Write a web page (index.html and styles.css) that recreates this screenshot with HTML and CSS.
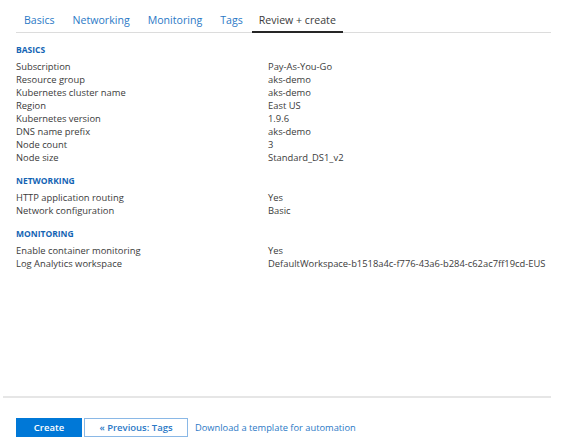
FILE: index.html
```html
<!DOCTYPE html>
<html>
<head>
<meta charset="utf-8">
<link rel="stylesheet" href="styles.css">
</head>
<body>
<div class="page">
  <nav class="tabs">
    <span class="tab">Basics</span>
    <span class="tab">Networking</span>
    <span class="tab">Monitoring</span>
    <span class="tab">Tags</span>
    <span class="tab active">Review + create</span>
  </nav>
  <main class="content">
    <section class="group">
      <h3 class="heading">BASICS</h3>
      <div class="row"><span class="label">Subscription</span><span class="value">Pay-As-You-Go</span></div>
      <div class="row"><span class="label">Resource group</span><span class="value">aks-demo</span></div>
      <div class="row"><span class="label">Kubernetes cluster name</span><span class="value">aks-demo</span></div>
      <div class="row"><span class="label">Region</span><span class="value">East US</span></div>
      <div class="row"><span class="label">Kubernetes version</span><span class="value">1.9.6</span></div>
      <div class="row"><span class="label">DNS name prefix</span><span class="value">aks-demo</span></div>
      <div class="row"><span class="label">Node count</span><span class="value">3</span></div>
      <div class="row"><span class="label">Node size</span><span class="value">Standard_DS1_v2</span></div>
    </section>
    <section class="group">
      <h3 class="heading">NETWORKING</h3>
      <div class="row"><span class="label">HTTP application routing</span><span class="value">Yes</span></div>
      <div class="row"><span class="label">Network configuration</span><span class="value">Basic</span></div>
    </section>
    <section class="group">
      <h3 class="heading">MONITORING</h3>
      <div class="row"><span class="label">Enable container monitoring</span><span class="value">Yes</span></div>
      <div class="row"><span class="label">Log Analytics workspace</span><span class="value">DefaultWorkspace-b1518a4c-f776-43a6-b284-c62ac7ff19cd-EUS</span></div>
    </section>
  </main>
  <footer class="footer">
    <button class="btn primary">Create</button>
    <button class="btn secondary">« Previous: Tags</button>
    <a class="link">Download a template for automation</a>
  </footer>
</div>
</body>
</html>
```
FILE: styles.css
```css
html, body {
  margin: 0;
  padding: 0;
  background: #fff;
}
body {
  font-family: "Open Sans", "Noto Sans", sans-serif;
  color: #3b3b3b;
  width: 573px;
  height: 448px;
  overflow: hidden;
}
.page {
  display: flex;
  flex-direction: column;
  height: 448px;
}
.tabs {
  display: flex;
  margin: 10px 22px 0 16px;
  border-bottom: 1px solid #dcdcdc;
  height: 23px;
  box-sizing: border-box;
}
.tab {
  font-size: 10.6px;
  color: #2b79c6;
  padding: 0 8px;
  margin-right: 2px;
  line-height: 21px;
}
.tab.active {
  color: #3b3b3b;
  padding: 0 7px;
  margin-left: -1px;
  border-bottom: 2px solid #262626;
  margin-bottom: -1px;
}
.content {
  flex: 1;
  padding: 11px 16px 0 16px;
}
.group {
  margin-bottom: 11px;
}
.heading {
  margin: 0 0 4px 0;
  font-size: 8.5px;
  font-weight: 700;
  color: #1464b4;
  line-height: 12px;
}
.row {
  display: grid;
  grid-template-columns: 252px 1fr;
  font-size: 9.4px;
  line-height: 13px;
  white-space: nowrap;
}
.footer {
  margin: 0 22px 11px 3px;
  border-top: 2px solid #e6e6e6;
  padding: 20px 0 0 13px;
  display: flex;
  align-items: center;
  gap: 2px;
  height: 19px;
  box-sizing: content-box;
}
.btn {
  font-family: "Open Sans", "Noto Sans", sans-serif;
  font-size: 9.5px;
  font-weight: 600;
  height: 19px;
  padding: 0;
  box-sizing: border-box;
  cursor: pointer;
}
.primary {
  width: 66px;
  background: #0078d7;
  color: #fff;
  border: 1px solid #0078d7;
}
.secondary {
  width: 104px;
  background: #fff;
  color: #2b79c6;
  border: 1px solid #8ab8e6;
}
.link {
  margin-left: 5px;
  font-size: 9.3px;
  color: #2b79c6;
}
```
